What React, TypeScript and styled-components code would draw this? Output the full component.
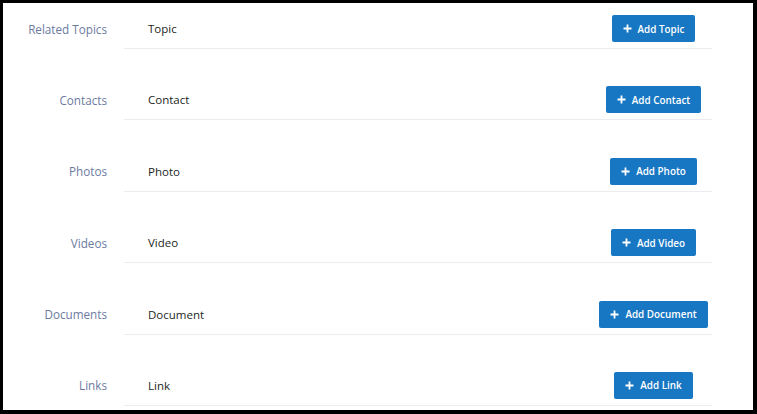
import styled, { createGlobalStyle } from "styled-components";

const GlobalStyle = createGlobalStyle`
  html, body {
    margin: 0;
    padding: 0;
    background: #000;
  }
  body {
    font-family: "Open Sans", "DejaVu Sans", sans-serif;
  }
`;

const Frame = styled.div`
  box-sizing: border-box;
  width: 757px;
  height: 414px;
  padding: 3px 4px 4px 3px;
  background: #000;
`;

const Panel = styled.div`
  height: 100%;
  background: #fff;
  overflow: hidden;
`;

const Row = styled.div`
  display: grid;
  grid-template-columns: 104px 588px;
  column-gap: 17px;
  margin-bottom: 25.4px;
`;

const Label = styled.div`
  display: flex;
  align-items: center;
  justify-content: flex-end;
  padding: 12px 0 7px;
  font-size: 11.7px;
  color: #6c7a9f;
`;

const Field = styled.div`
  display: grid;
  grid-template-columns: 1fr 117px;
  align-items: center;
  padding: 12px 0 6px 24px;
  border-bottom: 1px solid #ececf0;
`;

const Value = styled.span`
  font-size: 11.5px;
  font-weight: 500;
  color: #1d1f24;
`;

const Cell = styled.div`
  display: flex;
  justify-content: center;
`;

const AddButton = styled.button`
  display: flex;
  align-items: center;
  gap: 6px;
  height: 27px;
  padding: 0 11px;
  border: none;
  border-radius: 2px;
  background: #1877c3;
  color: #fff;
  font-family: inherit;
  font-size: 9.9px;
  font-weight: 600;
  white-space: nowrap;
  cursor: pointer;
`;

const Plus = () => (
  <svg width="9" height="9" viewBox="0 0 9 9">
    <path d="M4.5 0.5v8M0.5 4.5h8" stroke="#fff" strokeWidth="1.8" />
  </svg>
);

const rows = [
  { label: "Related Topics", value: "Topic" },
  { label: "Contacts", value: "Contact" },
  { label: "Photos", value: "Photo" },
  { label: "Videos", value: "Video" },
  { label: "Documents", value: "Document" },
  { label: "Links", value: "Link" },
];

const App = () => {
  return (
    <>
      <GlobalStyle />
      <Frame>
        <Panel>
          {rows.map((r) => (
            <Row key={r.label}>
              <Label>{r.label}</Label>
              <Field>
                <Value>{r.value}</Value>
                <Cell>
                  <AddButton>
                    <Plus />
                    Add {r.value}
                  </AddButton>
                </Cell>
              </Field>
            </Row>
          ))}
        </Panel>
      </Frame>
    </>
  );
};

export default App;
